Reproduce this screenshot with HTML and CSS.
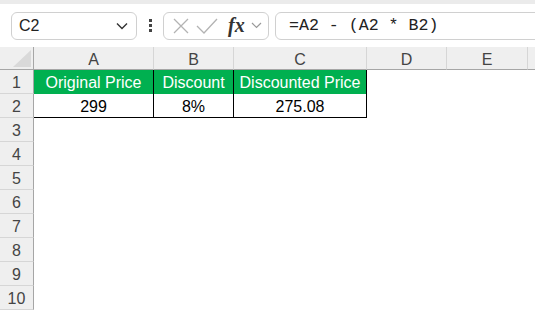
FILE: index.html
```html
<!DOCTYPE html>
<html lang="en">
<head>
  <meta charset="UTF-8">
  <title>Discount Sheet</title>
  <link rel="stylesheet" href="styles.css">
</head>
<body>
  <!-- Formula bar -->
  <div class="toolbar">
    <div class="name-box">
      <span>C2</span>
      <svg class="chev" width="12" height="8" viewBox="0 0 12 8"><path d="M1 1.5 L6 6.5 L11 1.5" fill="none" stroke="#333" stroke-width="1.4"/></svg>
    </div>
    <div class="grip">
      <span></span><span></span><span></span>
    </div>
    <div class="fx-box">
      <svg width="18" height="18" viewBox="0 0 18 18"><path d="M2 2 L16 16 M16 2 L2 16" stroke="#b3b3b3" stroke-width="1.3" fill="none"/></svg>
      <svg width="22" height="18" viewBox="0 0 22 18"><path d="M1 9 L8 16 L21 2" stroke="#b3b3b3" stroke-width="1.3" fill="none"/></svg>
      <span class="fx">fx</span>
      <svg width="11" height="7" viewBox="0 0 11 7"><path d="M1 1 L5.5 5.5 L10 1" fill="none" stroke="#999" stroke-width="1.2"/></svg>
    </div>
    <div class="formula">=A2 - (A2 * B2)</div>
  </div>

  <!-- Sheet -->
  <div class="sheet">
    <div class="corner"><span class="tri"></span></div>
    <div class="col-head">A</div>
    <div class="col-head">B</div>
    <div class="col-head">C</div>
    <div class="col-head">D</div>
    <div class="col-head">E</div>
    <div class="col-head last"></div>

    <div class="row-head">1</div>
    <div class="cell head">Original Price</div>
    <div class="cell head">Discount</div>
    <div class="cell head">Discounted Price</div>
    <div class="cell"></div><div class="cell"></div><div class="cell"></div>

    <div class="row-head">2</div>
    <div class="cell data">299</div>
    <div class="cell data">8%</div>
    <div class="cell data">275.08</div>
    <div class="cell"></div><div class="cell"></div><div class="cell"></div>

    <div class="row-head">3</div><div class="cell span"></div>
    <div class="row-head">4</div><div class="cell span"></div>
    <div class="row-head">5</div><div class="cell span"></div>
    <div class="row-head">6</div><div class="cell span"></div>
    <div class="row-head">7</div><div class="cell span"></div>
    <div class="row-head">8</div><div class="cell span"></div>
    <div class="row-head">9</div><div class="cell span"></div>
    <div class="row-head">10</div><div class="cell span"></div>
  </div>
</body>
</html>
```

FILE: styles.css
```css
/* General styles */
* {
  box-sizing: border-box;
}

body {
  margin: 0;
  width: 535px;
  overflow: hidden;
  font-family: "Liberation Sans", Arial, sans-serif;
  background-color: white;
}

/* Formula bar */
.toolbar {
  display: flex;
  align-items: center;
  height: 47px;
  padding-left: 11px;
  border-top: 4px solid #ebebeb;
}

.name-box,
.fx-box,
.formula {
  height: 28px;
  border: 1px solid #d0d0d0;
  border-radius: 6px;
  display: flex;
  align-items: center;
}

.name-box {
  width: 126px;
  padding: 0 8px 0 7px;
  justify-content: space-between;
  font-size: 16px;
  color: #222;
}

.grip {
  width: 26px;
  display: flex;
  flex-direction: column;
  align-items: center;
  gap: 2px;
}

.grip span {
  width: 3px;
  height: 3px;
  background-color: #444;
}

.fx-box {
  width: 106px;
  padding: 0 4px 0 8px;
  gap: 6px;
}

.fx {
  font-family: "Liberation Serif", serif;
  font-style: italic;
  font-weight: bold;
  font-size: 20px;
  color: #333;
  margin-left: 4px;
}

.formula {
  flex: 1;
  margin-left: 6px;
  margin-right: -10px;
  padding-left: 13px;
  font-family: "Liberation Mono", monospace;
  font-size: 16.6px;
  color: #222;
  white-space: pre;
}

/* Sheet grid */
.sheet {
  display: grid;
  grid-template-columns: 34px 120px 80px 133px 80px 81px 1fr;
  grid-template-rows: 23px repeat(10, 24px);
}

.corner {
  background-color: #efefef;
  border-right: 1px solid #a6a6a6;
  border-bottom: 1px solid #a6a6a6;
  display: flex;
  align-items: flex-end;
  justify-content: flex-end;
  padding: 0 2px 2px 0;
}

.tri {
  width: 0;
  height: 0;
  border-left: 18px solid transparent;
  border-bottom: 17px solid #d9d9d9;
}

.col-head {
  background-color: #efefef;
  border-right: 1px solid #d6d6d6;
  border-bottom: 1px solid #a6a6a6;
  display: flex;
  align-items: center;
  justify-content: center;
  padding-top: 3px;
  font-size: 16px;
  color: #444;
}

.col-head.last {
  border-right: none;
}

.row-head {
  background-color: #efefef;
  border-right: 1px solid #a6a6a6;
  border-bottom: 1px solid #d6d6d6;
  display: flex;
  align-items: center;
  justify-content: center;
  padding-top: 2px;
  font-size: 16px;
  color: #444;
}

.cell {
  display: flex;
  align-items: center;
  justify-content: center;
  padding-top: 2px;
  font-size: 16px;
}

.cell.head {
  background-color: #00b050;
  color: white;
  border-right: 1px solid #000;
}

.cell.data {
  color: #000;
  border-right: 1px solid #000;
  border-bottom: 1px solid #000;
}

.cell.span {
  grid-column: 2 / -1;
}
```
